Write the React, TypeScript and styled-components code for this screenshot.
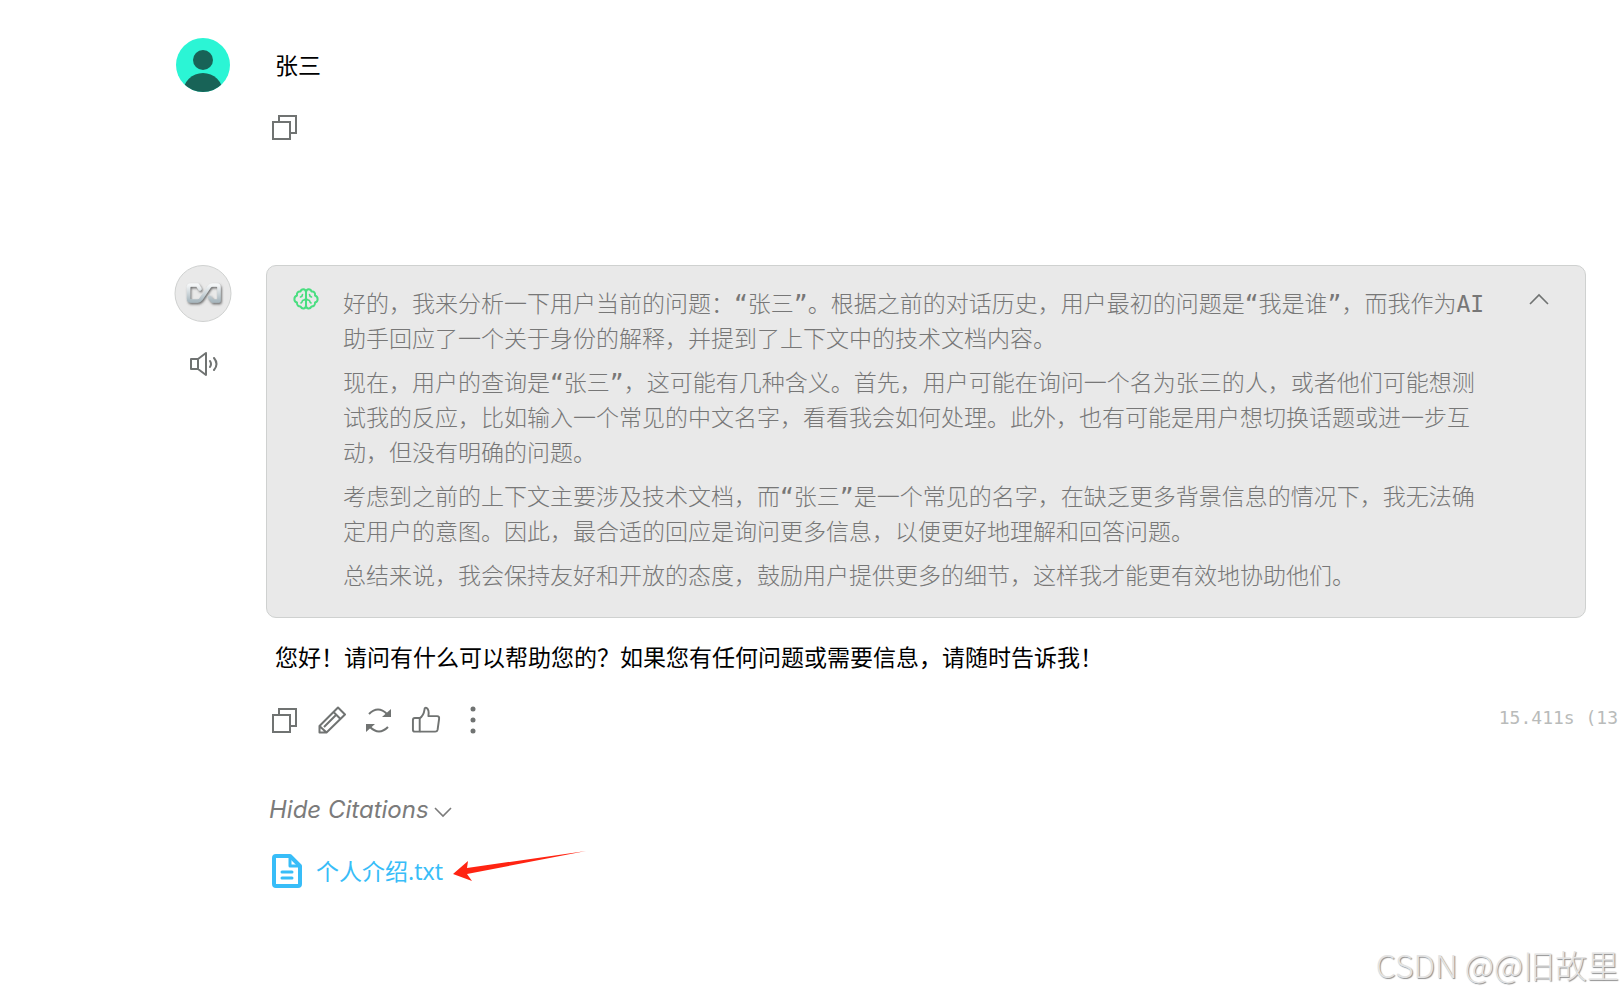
import React from "react";
import styled, { createGlobalStyle } from "styled-components";

const GlobalStyle = createGlobalStyle`
  *, *::before, *::after { box-sizing: border-box; }
  body {
    margin: 0;
    background: #ffffff;
    color: #000000;
    font-family: "Noto Sans", "Noto Sans CJK SC", sans-serif;
    font-size: 23px;
    line-height: 34px;
    overflow-x: hidden;
  }
  p { margin: 0; }
`;

const Page = styled.main`
  position: relative;
  min-height: 100vh;
  padding: 36px 0 0 174px;
  overflow: hidden;
`;

const Message = styled.article<{ $top?: number }>`
  display: grid;
  grid-template-columns: 58px minmax(0, 1fr);
  column-gap: 34px;
  margin-top: ${(p) => p.$top ?? 0}px;
`;

const Side = styled.div`
  display: flex;
  flex-direction: column;
  align-items: center;
  gap: 25px;
`;

const Avatar = styled.svg`
  display: block;
  width: 58px;
  height: 58px;
`;

const Body = styled.div`
  min-width: 0;
`;

const MessageText = styled.p<{ $top: number }>`
  margin-top: ${(p) => p.$top}px;
  padding-left: 9px;
  font-family: "Noto Sans CJK SC", sans-serif;
`;

const Toolbar = styled.div<{ $top: number }>`
  display: flex;
  align-items: center;
  gap: 16px;
  margin-top: ${(p) => p.$top}px;
  padding-left: 3px;
`;

const IconButton = styled.button`
  display: grid;
  place-items: center;
  width: 31px;
  height: 32px;
  padding: 0;
  border: 0;
  background: none;
  color: #707372;
  cursor: pointer;
`;

const CollapseButton = styled(IconButton)`
  width: 24px;
  height: 26px;
`;

const Timing = styled.span`
  flex: none;
  margin-left: auto;
  padding: 0 3px 4px 0;
  color: #b9bbba;
  font: 18px/24px "DejaVu Sans Mono", monospace;
  white-space: pre;
`;

const Reasoning = styled.section`
  display: grid;
  grid-template-columns: 26px minmax(0, 1fr) 24px;
  column-gap: 24px;
  align-items: start;
  margin-right: 35px;
  padding: 20px 34px 23px 26px;
  border: 1px solid #cfd1d0;
  border-radius: 10px;
  background: #e9e9e9;
`;

const ReasoningText = styled.div`
  display: grid;
  gap: 9px;
  margin-right: 12px;
  padding-top: 1px;
  color: #777777;
  font: 300 23px/35px "DejaVu Sans Mono", "Noto Sans CJK SC", monospace;
`;

const CitationToggle = styled.button`
  display: flex;
  align-items: center;
  gap: 5px;
  margin: 57px 0 0 3px;
  padding: 0;
  border: 0;
  background: none;
  color: #7b7b7b;
  font: italic 24px/34px Inter, sans-serif;
  cursor: pointer;

  svg {
    margin-top: 4px;
  }
`;

const CitationRow = styled.div`
  display: flex;
  align-items: center;
  margin: 27px 0 0 6px;
`;

const CitationLink = styled.a`
  display: flex;
  align-items: center;
  gap: 14px;
  color: #38bdf8;
  font-family: "Noto Sans", "Noto Sans CJK SC", sans-serif;
  text-decoration: none;
`;

const Pointer = styled.svg`
  width: 134px;
  height: 34px;
  margin: -8px 0 0 10px;
`;

const Watermark = styled.div`
  position: absolute;
  right: 2px;
  bottom: 6px;
  color: #e3e3e3;
  font: 300 32px/48px "Noto Sans CJK SC", sans-serif;
  text-shadow: 1px 1px 1px #8f8f8f;
`;

const CopyIcon = () => (
  <svg width="27" height="27" viewBox="0 0 27 27" fill="none" stroke="currentColor" strokeWidth="2">
    <path d="M8 8V2H25V19H19" />
    <path d="M2 8H19V25H2Z" />
  </svg>
);

const paragraphs = [
  "好的，我来分析一下用户当前的问题：“张三”。根据之前的对话历史，用户最初的问题是“我是谁”，而我作为AI助手回应了一个关于身份的解释，并提到了上下文中的技术文档内容。",
  "现在，用户的查询是“张三”，这可能有几种含义。首先，用户可能在询问一个名为张三的人，或者他们可能想测试我的反应，比如输入一个常见的中文名字，看看我会如何处理。此外，也有可能是用户想切换话题或进一步互动，但没有明确的问题。",
  "考虑到之前的上下文主要涉及技术文档，而“张三”是一个常见的名字，在缺乏更多背景信息的情况下，我无法确定用户的意图。因此，最合适的回应是询问更多信息，以便更好地理解和回答问题。",
  "总结来说，我会保持友好和开放的态度，鼓励用户提供更多的细节，这样我才能更有效地协助他们。",
];

export default function App() {
  return (
    <>
      <GlobalStyle />
      <Page lang="zh-CN">
        <Message>
          <Side>
            <Avatar viewBox="0 0 58 58" aria-hidden="true">
              <clipPath id="user-clip"><circle cx="29" cy="29" r="27" /></clipPath>
              <circle cx="29" cy="29" r="27" fill="#2bf5d5" />
              <g fill="#186357" clipPath="url(#user-clip)">
                <circle cx="29" cy="24" r="10" />
                <circle cx="29" cy="57" r="20" />
              </g>
            </Avatar>
          </Side>
          <Body>
            <MessageText $top={11}>张三</MessageText>
            <Toolbar $top={30}>
              <IconButton aria-label="复制"><CopyIcon /></IconButton>
            </Toolbar>
          </Body>
        </Message>

        <Message $top={122}>
          <Side>
            <Avatar viewBox="0 0 58 58" aria-hidden="true">
              <defs>
                <linearGradient id="metal" x1="0" y1="0" x2="0" y2="1">
                  <stop offset="0" stopColor="#f4f6f7" />
                  <stop offset="1" stopColor="#a9b8bf" />
                </linearGradient>
                <filter id="metal-shadow" x="-20%" y="-30%" width="150%" height="170%">
                  <feDropShadow dx="1" dy="1.5" stdDeviation="1.2" floodColor="#444444" floodOpacity="0.8" />
                </filter>
              </defs>
              <circle cx="29" cy="28.5" r="28" fill="#e9e9e9" stroke="#cfd1d0" />
              <path
                d="M26 24L23.500 20H17Q14.500 20 14.500 22.500V33.500Q14.500 36 17 36H23.500Q25.500 36 27 34L35 22Q36.500 20 38.500 20H42.500Q45 20 45 22.500V36H38.500L35.500 32"
                fill="none"
                stroke="url(#metal)"
                strokeWidth="3.500"
                strokeLinejoin="round"
                strokeLinecap="round"
                filter="url(#metal-shadow)"
              />
            </Avatar>
            <IconButton aria-label="朗读">
              <svg width="30" height="26" viewBox="0 0 30 26" fill="none" stroke="currentColor" strokeWidth="2" strokeLinejoin="round" strokeLinecap="round">
                <path d="M10 8H3V18H10L18 24V2Z M10 8V18" />
                <path d="M22 10Q24 13 22 16M26 7Q31 13 26 19" />
              </svg>
            </IconButton>
          </Side>
          <Body>
            <Reasoning>
              <svg width="26" height="26" viewBox="0 0 26 26" fill="none" stroke="#4ade80" strokeWidth="2" strokeLinecap="round" strokeLinejoin="round" aria-hidden="true">
                <path d="M13 6C12.500 2.500 8.500 2.500 7.500 5.500C5 5 3.500 7 4 9.500C.5 11 .5 15.500 4 16.500C3.500 19 5.500 20.500 7.500 20.500C9 23.500 13 23 13 19.500Z" />
                <path d="M13 6C13.500 2.500 17.500 2.500 18.500 5.500C21 5 22.500 7 22 9.500C25.500 11 25.500 15.500 22 16.500C22.500 19 20.500 20.500 18.500 20.500C17 23.500 13 23 13 19.500" />
                <path d="M9.500 8.500Q9.500 10.500 7.500 11M16.500 8.500Q16.500 10.500 18.500 11M13 12.500Q12 14 9.500 14.500Q9.500 16 8 17M13 12.500Q14 14 16.500 14.500Q16.500 16 18 17" strokeWidth="1.600" />
              </svg>
              <ReasoningText>
                {paragraphs.map((text) => <p key={text}>{text}</p>)}
              </ReasoningText>
              <CollapseButton aria-label="收起">
                <svg width="20" height="12" viewBox="0 0 20 12" fill="none" stroke="currentColor" strokeWidth="1.600">
                  <path d="M1 11L10 2L19 11" />
                </svg>
              </CollapseButton>
            </Reasoning>
            <MessageText $top={21}>您好！请问有什么可以帮助您的？如果您有任何问题或需要信息，请随时告诉我！</MessageText>
            <Toolbar $top={31}>
              <IconButton aria-label="复制"><CopyIcon /></IconButton>
              <IconButton aria-label="编辑">
                <svg width="28" height="28" viewBox="0 0 28 28" fill="none" stroke="currentColor" strokeWidth="2" strokeLinejoin="round">
                  <path d="M1.500 26.500V20L20 1.500L27 8.500L8.500 26.500ZM1.500 20L8.500 26.500M15.500 6L22.500 13M6 21L18 9" />
                </svg>
              </IconButton>
              <IconButton aria-label="重新生成">
                <svg width="27" height="27" viewBox="0 0 27 27" fill="none" stroke="currentColor" strokeWidth="2">
                  <path d="M4 7Q13-2 22 7M5 20Q14 29 23 20" />
                  <path d="M26 2V10H17ZM1 25V17H10Z" fill="currentColor" stroke="none" />
                </svg>
              </IconButton>
              <IconButton aria-label="赞">
                <svg width="30" height="28" viewBox="0 0 31 28" fill="none" stroke="currentColor" strokeWidth="2" strokeLinejoin="round">
                  <path d="M9 12H4Q2 12 2 14V24Q2 26 4 26H9Z" />
                  <path d="M9 12Q13 10 14 3Q14 1 16 1.500Q19 3 18 10H27Q29.500 10 29 13L27.500 24Q27 26 25 26H9" />
                </svg>
              </IconButton>
              <IconButton aria-label="更多">
                <svg width="6" height="28" viewBox="0 0 6 28" fill="currentColor">
                  <circle cx="3" cy="3" r="2.500" /><circle cx="3" cy="14" r="2.500" /><circle cx="3" cy="25" r="2.500" />
                </svg>
              </IconButton>
              <Timing>15.411s (13</Timing>
            </Toolbar>
            <CitationToggle lang="en">
              Hide Citations
              <svg width="18" height="12" viewBox="0 0 18 12" fill="none" stroke="currentColor" strokeWidth="1.600" aria-hidden="true">
                <path d="M1 2L9 10L17 2" />
              </svg>
            </CitationToggle>
            <CitationRow>
              <CitationLink href="#citation">
                <svg width="30" height="34" viewBox="0 0 30 34" fill="none" stroke="currentColor" strokeWidth="4" strokeLinejoin="round" aria-hidden="true">
                  <path d="M4 2H18L28 12V30Q28 32 26 32H4Q2 32 2 30V4Q2 2 4 2Z" />
                  <path d="M18 2V12H28" strokeWidth="3" />
                  <path d="M10 18H20M10 24H20" strokeWidth="3" strokeLinecap="round" />
                </svg>
                个人介绍.txt
              </CitationLink>
              <Pointer viewBox="0 0 134 34" aria-hidden="true">
                <path d="M0 24L15 11L14 18L133 1L14 24L19 31Z" fill="#ff2412" />
              </Pointer>
            </CitationRow>
          </Body>
        </Message>
        <Watermark>CSDN @@旧故里</Watermark>
      </Page>
    </>
  );
}
